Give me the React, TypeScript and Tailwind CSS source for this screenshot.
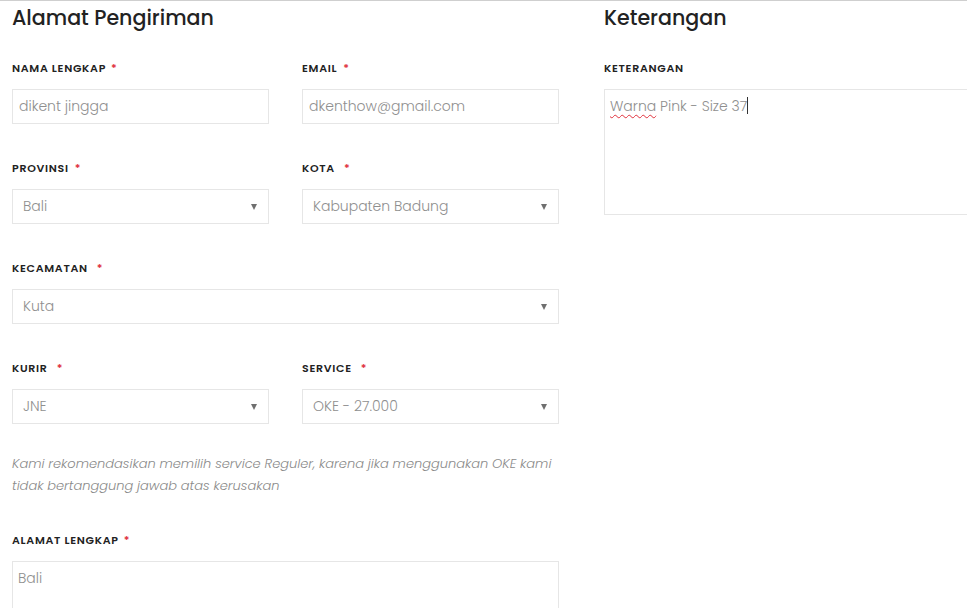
import React from "react";

const font = { fontFamily: "Poppins, Inter, 'Open Sans', sans-serif" };

function Label({ text, star = true, gap = 6 }: { text: string; star?: boolean; gap?: number }) {
  return (
    <div className="h-[16px] leading-[16px] text-[11px] font-semibold tracking-[0.7px] text-[#222] uppercase whitespace-nowrap">
      {text}
      {star ? (
        <span className="text-[#e0313c] text-[11px]" style={{ marginLeft: gap }}>*</span>
      ) : null}
    </div>
  );
}

function Box({ value, select }: { value: string; select?: boolean }) {
  return (
    <div className={`mt-[13px] h-[35px] border border-[#e6e6e6] bg-white flex items-center ${select ? "pl-[10px]" : "pl-[6px]"} pr-[10px] text-[14px] font-light text-[#8f8f8f]`}>
      <span className="flex-1 whitespace-nowrap">{value}</span>
      {select ? (
        <span className="w-0 h-0 border-l-[3.5px] border-r-[3.5px] border-t-[6px] border-l-transparent border-r-transparent border-t-[#6f6f6f] mr-[1px]" />
      ) : null}
    </div>
  );
}

function Field({ label, value, select, gap }: { label: string; value: string; select?: boolean; gap?: number }) {
  return (
    <div className="flex-1 min-w-0">
      <Label text={label} gap={gap} />
      <Box value={value} select={select} />
    </div>
  );
}

export default function App() {
  return (
    <div className="w-[967px] h-[608px] overflow-hidden bg-white border-t border-[#cfcfcf]" style={font}>
      <div className="flex pl-[12px]">
        <div className="w-[547px] shrink-0">
          <h2 className="text-[20.6px] leading-[33px] font-medium text-[#222]">Alamat Pengiriman</h2>
          <div className="mt-[26px] flex gap-[33px]">
            <Field label="Nama Lengkap" value="dikent jingga" gap={5} />
            <Field label="Email" value="dkenthow@gmail.com" gap={6} />
          </div>
          <div className="mt-[36px] flex gap-[33px]">
            <Field label="Provinsi" value="Bali" select gap={6} />
            <Field label="Kota" value="Kabupaten Badung" select gap={9} />
          </div>
          <div className="mt-[36px]">
            <Field label="Kecamatan" value="Kuta" select gap={9} />
          </div>
          <div className="mt-[36px] flex gap-[33px]">
            <Field label="Kurir" value="JNE" select gap={9} />
            <Field label="Service" value="OKE - 27.000" select gap={9} />
          </div>
          <p className="mt-[29px] text-[13px] leading-[22px] italic font-light text-[#8a8a8a]">
            Kami rekomendasikan memilih service Reguler, karena jika menggunakan OKE kami tidak bertanggung jawab atas kerusakan
          </p>
          <div className="mt-[35px]">
            <Label text="Alamat Lengkap" gap={5} />
            <div className="mt-[13px] h-[80px] border border-[#e6e6e6] pl-[5px] pt-[6px] text-[14px] font-light text-[#8f8f8f]">
              Bali
            </div>
          </div>
        </div>
        <div className="ml-[45px] w-[400px] shrink-0">
          <h2 className="text-[20.6px] leading-[33px] font-medium text-[#222]">Keterangan</h2>
          <div className="mt-[26px]">
            <Label text="Keterangan" star={false} />
            <div className="mt-[13px] h-[126px] border border-[#e6e6e6] pl-[5px] pt-[6px] text-[14px] font-light text-[#8f8f8f] flex items-start">
              <span className="underline decoration-wavy decoration-[#e0313c] decoration-[1px] underline-offset-[3px]">Warna</span>
              <span className="whitespace-pre"> Pink - Size 37</span>
              <span className="inline-block w-[1px] h-[17px] bg-[#333] mt-[1px]" />
            </div>
          </div>
        </div>
      </div>
    </div>
  );
}
